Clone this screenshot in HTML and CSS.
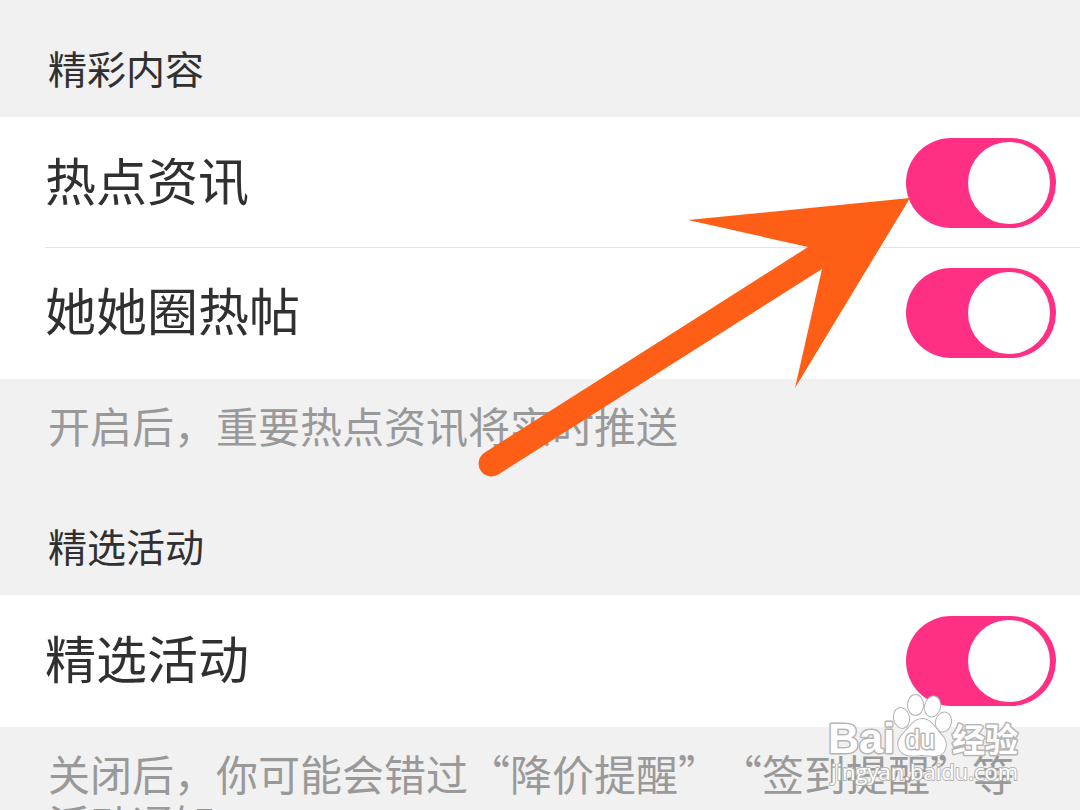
FILE: index.html
```html
<!DOCTYPE html>
<html lang="zh-CN">
<head>
<meta charset="utf-8">
<meta name="viewport" content="width=device-width, initial-scale=1">
<title>推送设置</title>
<link rel="stylesheet" href="styles.css">
</head>
<body>
<main class="settings">
  <section class="group">
    <h2 class="group-title">精彩内容</h2>
    <div class="card">
      <div class="row">
        <label class="row-label" for="hot-news">热点资讯</label>
        <input class="switch" id="hot-news" type="checkbox" role="switch" checked>
      </div>
      <div class="row">
        <label class="row-label" for="hot-posts">她她圈热帖</label>
        <input class="switch" id="hot-posts" type="checkbox" role="switch" checked>
      </div>
    </div>
    <p class="note">开启后，重要热点资讯将实时推送</p>
  </section>
  <section class="group">
    <h2 class="group-title">精选活动</h2>
    <div class="card">
      <div class="row">
        <label class="row-label" for="events">精选活动</label>
        <input class="switch" id="events" type="checkbox" role="switch" checked>
      </div>
    </div>
    <p class="note">关闭后，你可能会错过“降价提醒”“签到提醒”等活动通知</p>
  </section>
</main>

<svg class="arrow" width="450" height="300" viewBox="470 190 450 300" aria-hidden="true">
  <path d="M910 198 L688 220 L808 247 L484 453 A12.500 12.500 0 0 0 499 474 L822 269 L795 388 Z" fill="#ff5e17"/>
</svg>

<svg class="watermark" width="210" height="100" viewBox="820 690 210 100" role="img" aria-label="Baidu 经验">
  <g class="mark">
    <text class="mark-latin" x="828" y="753">Bai</text>
    <g class="mark-paw">
      <ellipse cx="901.500" cy="718" rx="7.500" ry="10" transform="rotate(-12 901.500 718)"/>
      <ellipse cx="915.500" cy="705" rx="7.500" ry="10"/>
      <ellipse cx="932.500" cy="706.500" rx="7.500" ry="10" transform="rotate(14 932.500 706.500)"/>
      <ellipse cx="943.500" cy="722" rx="7.500" ry="9.500" transform="rotate(14 943.500 722)"/>
      <path d="M922 719 C914 719 910 727 905 732 C899 737 897 743 899 748 C902 757 912 756 922 755 C933 756 942 758 945 749 C948 741 943 737 938 731 C934 726 930 719 922 719 Z"/>
    </g>
    <text class="mark-du" x="905" y="749">du</text>
    <text class="mark-cjk" x="952" y="752">经验</text>
    <text class="mark-url" x="831" y="780">jingyan.baidu.com</text>
  </g>
</svg>
</body>
</html>
```
FILE: styles.css
```css
* {
  box-sizing: border-box;
}

body {
  position: relative;
  height: 100vh;
  margin: 0;
  overflow: hidden;
  background: #f1f1f1;
  color: #303030;
  font-family: "Noto Sans CJK SC", sans-serif;
}

.group-title {
  margin: 0;
  padding: 37px 48px 20px;
  font-size: 39px;
  font-weight: 400;
  line-height: 60px;
}

.card {
  padding: 1px 0;
  background: #fff;
}

.row {
  display: flex;
  align-items: center;
  justify-content: space-between;
  min-height: 130px;
  margin-left: 45px;
  padding-right: 24px;
}

.row:not(:last-child) {
  border-bottom: 1px solid #e4e4e4;
}

.row-label {
  padding-bottom: 8px;
  font-size: 51px;
  line-height: 72px;
}

.switch {
  appearance: none;
  flex: none;
  display: flex;
  align-items: center;
  justify-content: flex-end;
  width: 150px;
  height: 90px;
  margin: 0;
  padding: 0 6px 0 4px;
  border-radius: 45px;
  background: #ff3083;
}

.switch::before {
  content: "";
  width: 82px;
  height: 82px;
  border-radius: 50%;
  background: #fff;
}

.switch:not(:checked) {
  justify-content: flex-start;
  background: #ccc;
}

.note {
  margin: 0;
  padding: 21px 48px 28px;
  color: #999;
  font-size: 42px;
  line-height: 50px;
  text-spacing-trim: space-all;
}

.arrow {
  position: absolute;
  top: 190px;
  left: 470px;
  pointer-events: none;
}

.watermark {
  position: absolute;
  top: 690px;
  left: 820px;
  pointer-events: none;
}

.mark {
  fill: #fff;
  stroke: #b5b5b5;
  stroke-width: 3px;
  stroke-linejoin: round;
  paint-order: stroke;
}

.mark-paw {
  stroke-width: 2px;
}

.mark-latin {
  font: 700 43px "Liberation Sans", sans-serif;
}

.mark-du {
  font: 400 27px "Liberation Sans", sans-serif;
}

.mark-cjk {
  font: 700 33px "Noto Sans CJK SC", sans-serif;
}

.mark-url {
  font: 400 22px "Open Sans", sans-serif;
  stroke-width: 2px;
}
```
